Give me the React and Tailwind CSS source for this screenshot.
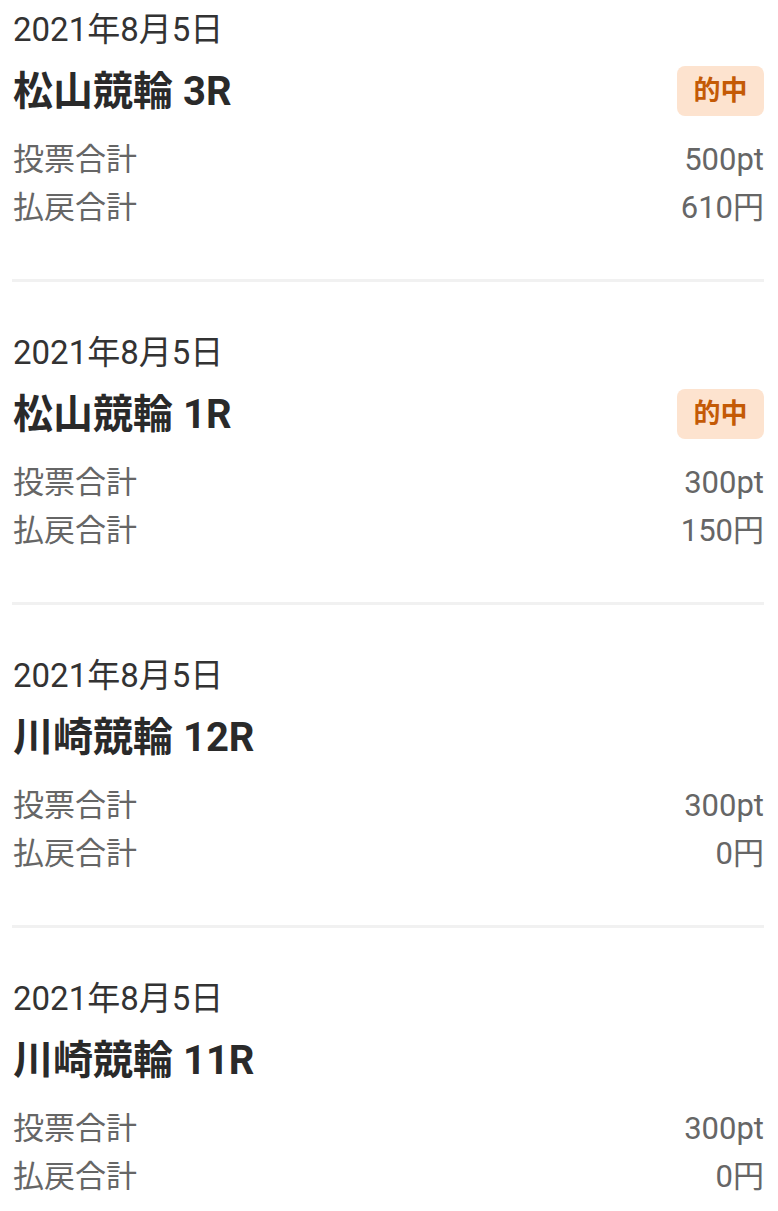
import React from 'react';

const records = [
  { date: '2021年8月5日', race: '松山競輪 3R', hit: true, bet: '500pt', payout: '610円' },
  { date: '2021年8月5日', race: '松山競輪 1R', hit: true, bet: '300pt', payout: '150円' },
  { date: '2021年8月5日', race: '川崎競輪 12R', hit: false, bet: '300pt', payout: '0円' },
  { date: '2021年8月5日', race: '川崎競輪 11R', hit: false, bet: '300pt', payout: '0円' },
];

const Record = ({ item }) => (
  <div className="pt-[12px] pb-[47px]">
    <div className="pl-[1px] text-[33px] leading-[36px] text-[#333]">{item.date}</div>
    <div className="mt-[18px] flex h-[50px] items-center justify-between">
      <h2 className="pl-[1px] pt-[1px] text-[40px] font-bold leading-[44px] text-[#2a2a2a]">{item.race}</h2>
      {item.hit && (
        <span className="flex h-[50px] w-[87px] items-center justify-center rounded-[8px] bg-[#fde3cf] text-[27px] font-bold text-[#c45a06]">
          的中
        </span>
      )}
    </div>
    <div className="mt-[20px] text-[31px] leading-[48px] text-[#666]">
      <div className="flex justify-between">
        <span className="pl-[1px]">投票合計</span>
        <span>{item.bet}</span>
      </div>
      <div className="flex justify-between">
        <span className="pl-[1px]">払戻合計</span>
        <span>{item.payout}</span>
      </div>
    </div>
  </div>
);

export default function App() {
  return (
    <div
      className="min-h-screen bg-white pl-[12px] pr-[14px]"
      style={{ fontFamily: "Roboto, 'Noto Sans CJK JP', sans-serif" }}
    >
      {records.map((r, i) => (
        <div key={i}>
          <Record item={r} />
          {i < records.length - 1 && <div className="mb-[41px] h-[3px] bg-[#f1f1f1]" />}
        </div>
      ))}
    </div>
  );
}
